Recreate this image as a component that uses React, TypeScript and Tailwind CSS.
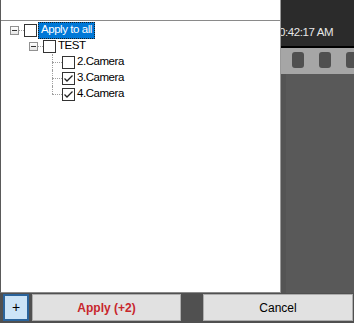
import React from "react";

const font = { fontFamily: '"Liberation Sans", Arial, sans-serif' };

function Check() {
  return (
    <svg width="11" height="11" viewBox="0 0 11 11">
      <path d="M1.5 5.5 L4 8 L9.5 2.5" fill="none" stroke="#222" strokeWidth="1.3" />
    </svg>
  );
}

function Box({ checked }: { checked?: boolean }) {
  return (
    <div className="w-[13px] h-[13px] border border-[#333] bg-white flex items-center justify-center shrink-0">
      {checked && <Check />}
    </div>
  );
}

function Minus() {
  return (
    <div className="w-[9px] h-[9px] border border-[#919191] bg-gradient-to-b from-white to-[#e6e6e6] flex items-center justify-center shrink-0">
      <div className="w-[5px] h-px bg-[#333]" />
    </div>
  );
}

function Dots({ w }: { w: string }) {
  return <div className={`${w} border-t border-dotted border-[#a0a0a0] shrink-0`} />;
}

function Leaf({ label, checked, last }: { label: string; checked?: boolean; last?: boolean }) {
  return (
    <div className="flex h-[16px] items-center">
      <div className="w-[51px] shrink-0" />
      <div className="relative w-[10px] h-full shrink-0">
        <div className={`absolute left-0 top-0 border-l border-dotted border-[#a0a0a0] ${last ? "h-1/2" : "h-full"}`} />
        <div className="absolute left-0 top-1/2 w-full border-t border-dotted border-[#a0a0a0]" />
      </div>
      <Box checked={checked} />
      <span className="pl-[2px] text-[11.5px] tracking-[-0.45px] text-black">{label}</span>
    </div>
  );
}

export default function App() {
  return (
    <div className="w-[354px] h-[323px] flex flex-col bg-[#505050] overflow-hidden" style={font}>
      <div className="flex h-[293px]">
        <div className="w-[281px] h-full bg-white border-l border-l-[#5a5a5a] border-r border-r-[#9a9a9a] border-b border-b-[#8a8a8a] flex flex-col shrink-0">
          <div className="h-[21px] border-b border-[#8a8a8a]" />
          <div className="pt-px">
            <div className="flex h-[16px] items-center">
              <div className="w-[9px] shrink-0" />
              <Minus />
              <Dots w="w-[5px]" />
              <Box />
              <span className="ml-px h-[17px] px-[2px] flex items-center bg-[#0078d7] text-white text-[11.5px] tracking-[-0.45px] border border-dotted border-[#1d1d1d]">
                Apply to all
              </span>
            </div>
            <div className="flex h-[16px] items-center">
              <div className="w-[28px] shrink-0" />
              <Minus />
              <Dots w="w-[5px]" />
              <Box />
              <span className="pl-[2px] text-[11.5px] tracking-[-0.45px] text-black">TEST</span>
            </div>
            <Leaf label="2.Camera" />
            <Leaf label="3.Camera" checked />
            <Leaf label="4.Camera" checked last />
          </div>
        </div>
        <div className="flex-1 flex flex-col overflow-hidden">
          <div className="h-[46px] bg-[#2b2b2b] flex items-end pb-[5px]">
            <span className="ml-[-8px] whitespace-nowrap text-[11.5px] tracking-[-0.4px] text-[#e6e6e6]">10:42:17 AM</span>
          </div>
          <div className="h-[2px] bg-black" />
          <div className="h-[26px] bg-[#a6a6a6] flex items-start pt-[4px] pl-[11px] gap-[15px]">
            <div className="w-[12px] h-[16px] rounded-[3px] bg-[#505050] shrink-0" />
            <div className="w-[12px] h-[16px] rounded-[3px] bg-[#505050] shrink-0" />
            <div className="w-[12px] h-[16px] rounded-[3px] bg-[#505050] shrink-0" />
          </div>
          <div className="flex-1 flex bg-[#595959]">
            <div className="w-[5px] bg-[#545454]" />
          </div>
        </div>
      </div>
      <div className="flex items-start pt-px pl-[3px]">
        <button className="w-[26px] h-[27px] border-2 border-[#2a649c] bg-[#cce4f7] text-[14px] font-light text-black flex items-center justify-center">
          +
        </button>
        <button className="ml-[3px] w-[149px] h-[27px] border border-[#adadad] bg-[#e1e1e1] text-[12px] font-bold text-[#c8262c] flex items-center justify-center">
          Apply (+2)
        </button>
        <button className="ml-[22px] w-[150px] h-[27px] border border-[#adadad] bg-[#e1e1e1] text-[12px] text-black flex items-center justify-center">
          Cancel
        </button>
      </div>
    </div>
  );
}
